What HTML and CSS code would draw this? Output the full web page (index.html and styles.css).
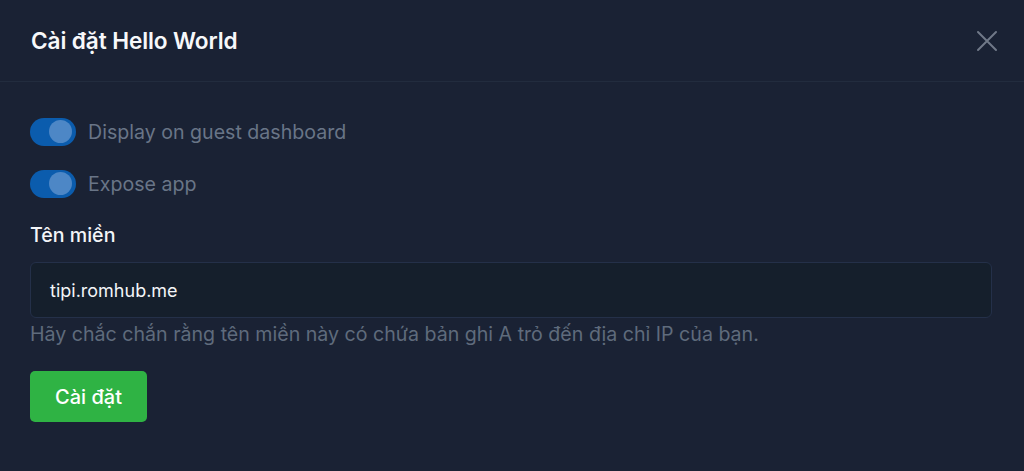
FILE: index.html
```html
<!DOCTYPE html>
<html lang="vi">
<head>
<meta charset="utf-8">
<link rel="stylesheet" href="styles.css">
</head>
<body>
<div class="modal">
  <header class="modal-header">
    <h1 class="modal-title">Cài đặt Hello World</h1>
    <button class="close" aria-label="Close">
      <svg width="22" height="22" viewBox="0 0 22 22"><path d="M2 2 L20 20 M20 2 L2 20" stroke="currentColor" stroke-width="2" stroke-linecap="round" fill="none"/></svg>
    </button>
  </header>
  <div class="modal-body">
    <label class="switch-row">
      <span class="switch on"><span class="knob"></span></span>
      <span class="switch-label">Display on guest dashboard</span>
    </label>
    <label class="switch-row">
      <span class="switch on"><span class="knob"></span></span>
      <span class="switch-label">Expose app</span>
    </label>
    <div class="field">
      <div class="field-label">Tên miền</div>
      <div class="input">tipi.romhub.me</div>
      <div class="hint">Hãy chắc chắn rằng tên miền này có chứa bản ghi A trỏ đến địa chỉ IP của bạn.</div>
    </div>
    <button class="btn-submit">Cài đặt</button>
  </div>
</div>
</body>
</html>
```
FILE: styles.css
```css
* { box-sizing: border-box; }
html, body { margin: 0; padding: 0; }
body {
  background: #1a2234;
  font-family: Inter, "Noto Sans", sans-serif;
  color: #f5f7fb;
  width: 1024px;
  height: 471px;
  overflow: hidden;
}
.modal-header {
  height: 82px;
  display: flex;
  align-items: center;
  justify-content: space-between;
  padding: 0 26px 0 31px;
  border-bottom: 1px solid #222c3e;
}
.modal-title {
  margin: 0;
  font-size: 22.6px;
  font-weight: 600;
  line-height: 26px;
  color: #f7f8fa;
  letter-spacing: -0.1px;
}
.close {
  background: none;
  border: 0;
  padding: 0;
  color: #707988;
  display: flex;
}
.modal-body {
  padding: 35px 32px 0 30px;
  display: flex;
  flex-direction: column;
}
.switch-row {
  display: flex;
  align-items: center;
  gap: 12px;
  height: 29px;
  margin-bottom: 23px;
}
.switch {
  width: 46px;
  height: 28px;
  border-radius: 14px;
  background: #0b5cad;
  display: flex;
  align-items: center;
  justify-content: flex-end;
  padding-right: 4px;
}
.knob {
  width: 23px;
  height: 23px;
  border-radius: 50%;
  background: #4d87c6;
}
.switch-label {
  font-size: 19.6px;
  line-height: 24px;
  color: #697587;
}
.field { display: flex; flex-direction: column; margin-top: 3px; }
.field-label {
  font-size: 19.6px;
  font-weight: 500;
  color: #f3f5f8;
  line-height: 22px;
  margin-bottom: 16px;
}
.input {
  height: 56px;
  border: 1px solid #243049;
  border-radius: 6px;
  background: #151f2c;
  display: flex;
  align-items: center;
  padding-left: 19px;
  font-size: 18px;
  color: #f3f5f8;
}
.hint {
  font-size: 19.6px;
  color: #5f6b7c;
  line-height: 22px;
  margin-top: 5px;
}
.btn-submit {
  margin-top: 26px;
  align-self: flex-start;
  width: 117px;
  height: 51px;
  border: 0;
  border-radius: 5px;
  background: #2fb344;
  color: #fff;
  font-family: Inter, "Noto Sans", sans-serif;
  font-size: 20px;
  font-weight: 500;
}
```
